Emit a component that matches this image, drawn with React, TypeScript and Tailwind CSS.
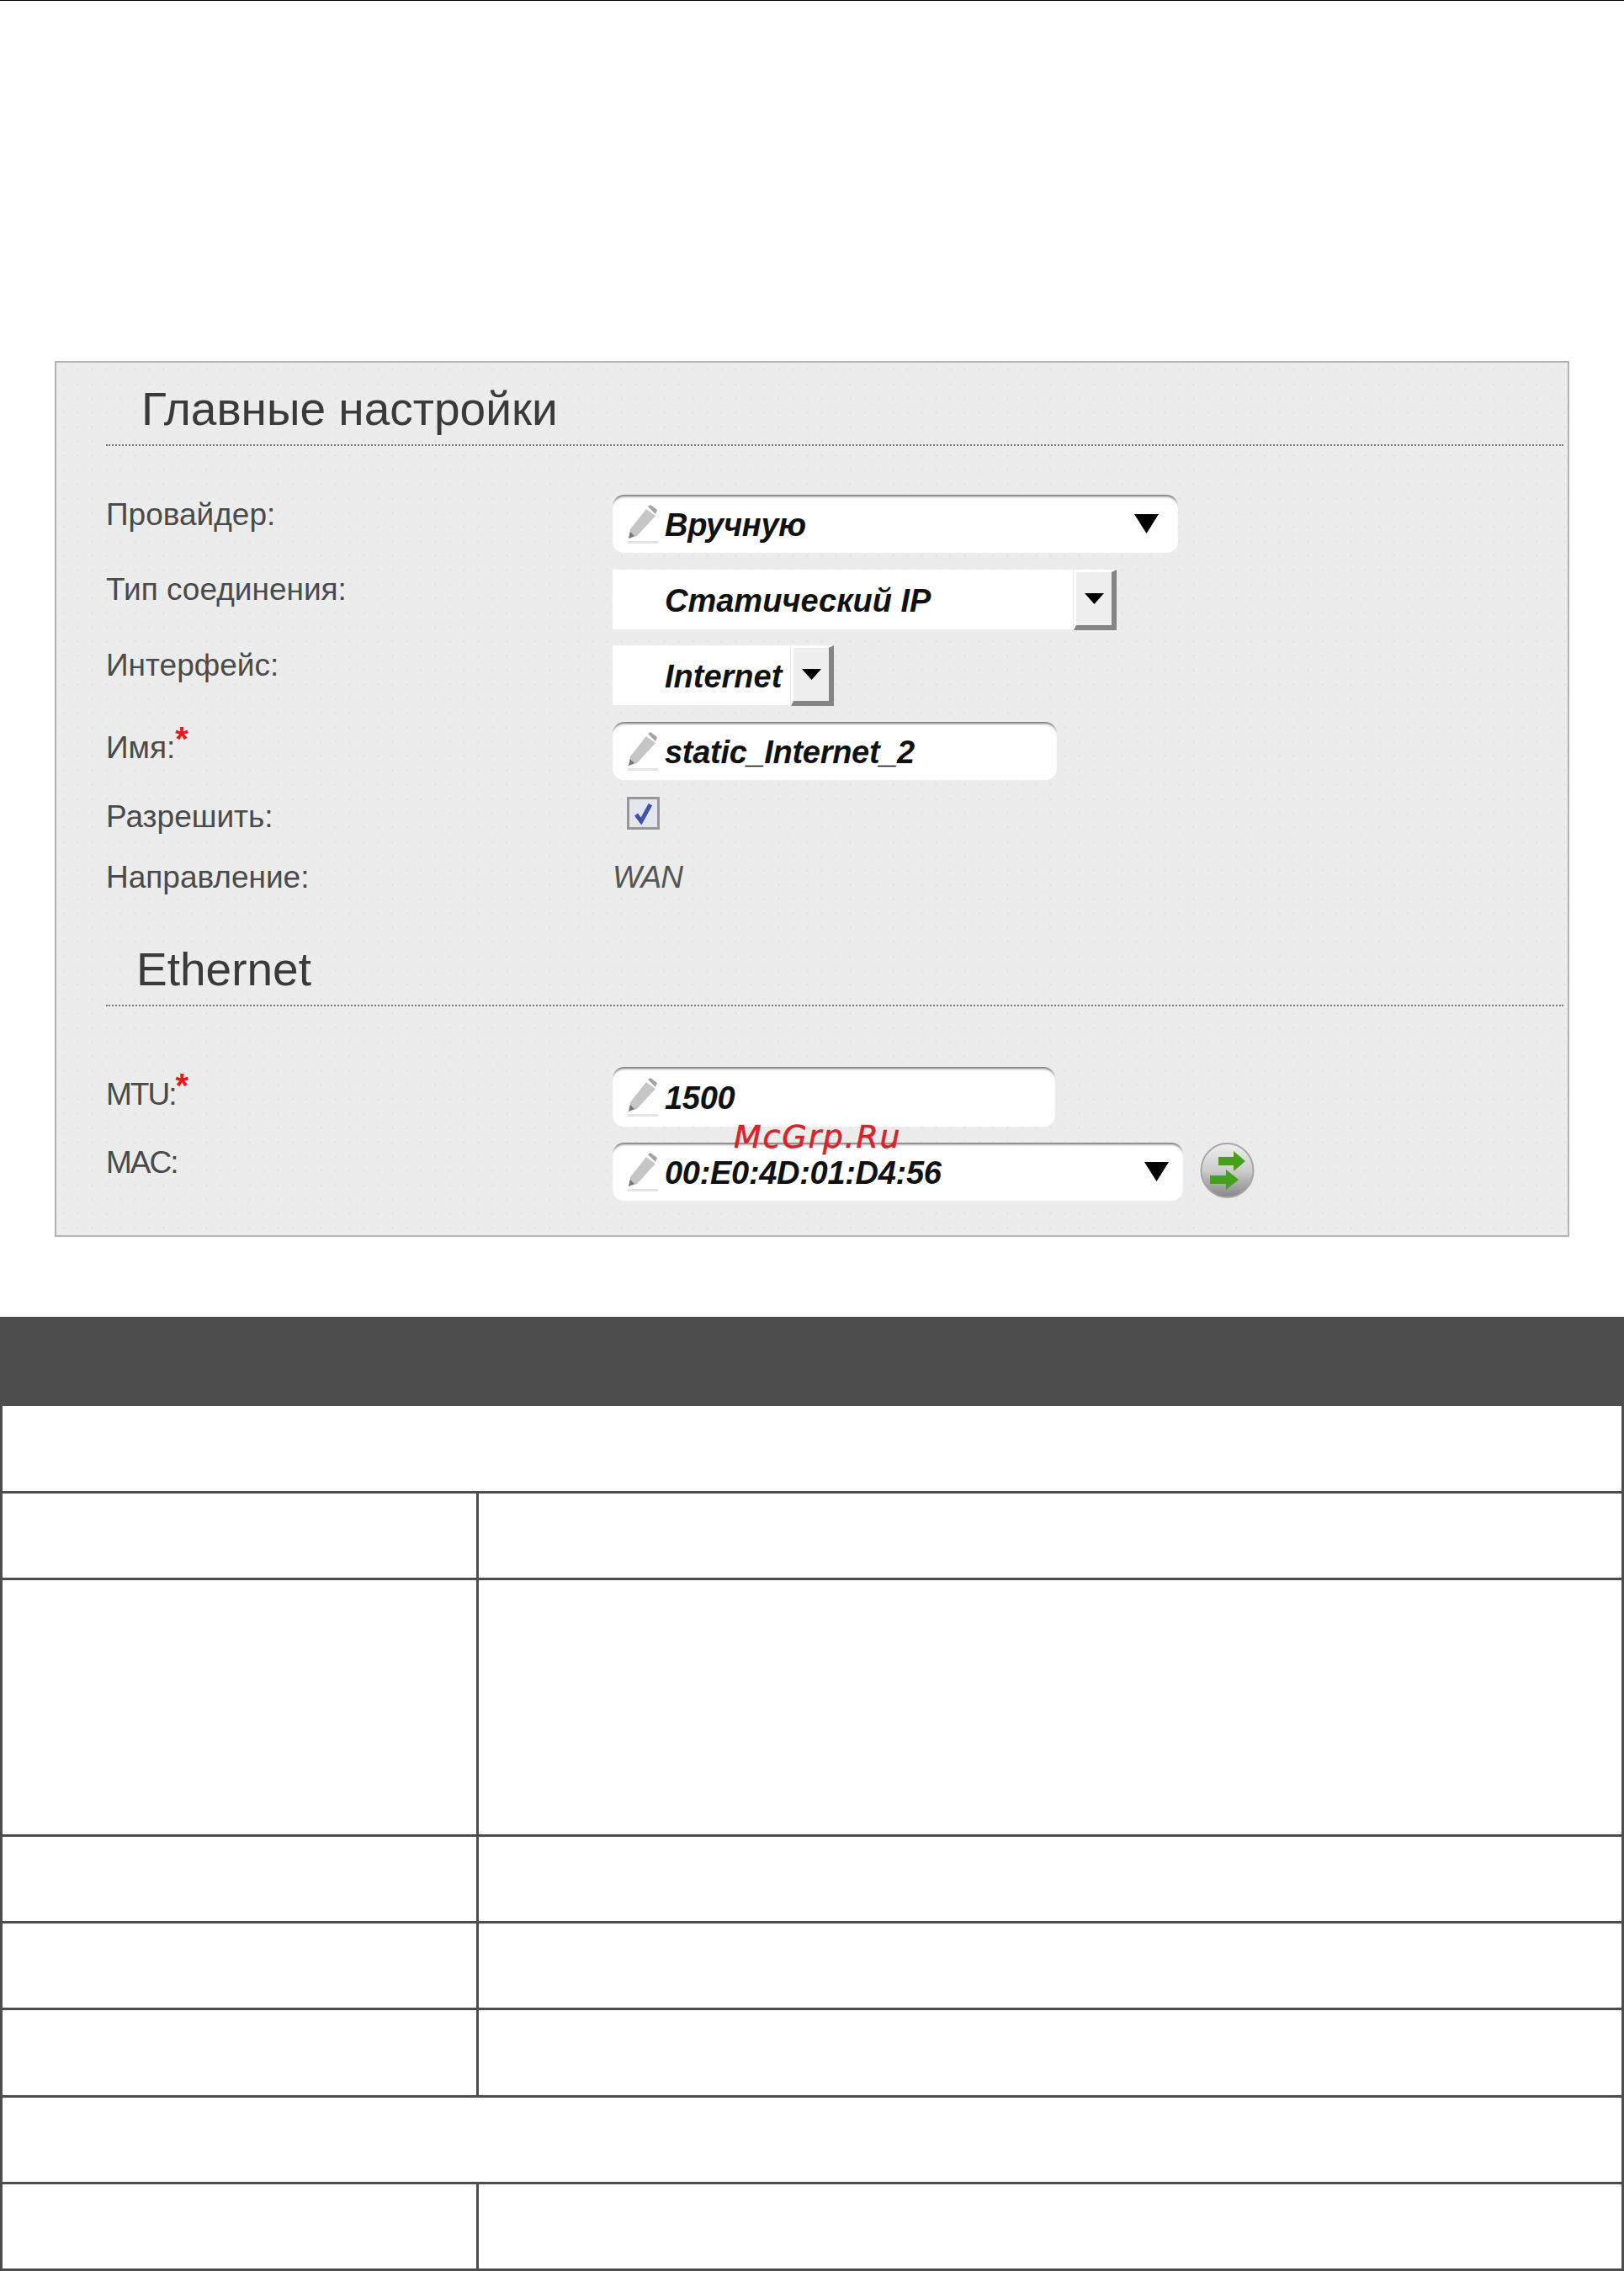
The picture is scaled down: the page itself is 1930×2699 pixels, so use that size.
const tableRows = [
  { h: "h-[104px]", full: true },
  { h: "h-[103px]", full: false },
  { h: "h-[305px]", full: false },
  { h: "h-[103px]", full: false },
  { h: "h-[103px]", full: false },
  { h: "h-[104px]", full: false },
  { h: "h-[103px]", full: true },
  { h: "h-[103px]", full: false },
]

const Pencil = () => (
  <svg width="38" height="48" viewBox="0 0 38 48" className="shrink-0">
    <polygon points="23,6 34,14 12,38 2,41 4,30" fill="#c6c6c6" />
    <polygon points="25,3 28,1 36,7 34,12" fill="#a3a3a3" />
    <polygon points="4,33 9,38 2,41" fill="#777" />
    <rect x="1" y="44" width="36" height="3" fill="#e4e4e4" />
  </svg>
)

const Triangle = ({ className }: { className: string }) => (
  <svg viewBox="0 0 29 23" preserveAspectRatio="none" className={className}>
    <polygon points="0,0 29,0 14.5,23" fill="#000" />
  </svg>
)

const Field = ({ w, h, value, arrow }: { w: string; h: string; value: string; arrow?: string }) => (
  <div className={`${w} ${h} flex items-center rounded-[14px] bg-white pl-[17px] shadow-[inset_0_4px_3px_-2px_#707070]`}>
    <Pencil />
    <span className="ml-[7px] pt-[3px] text-[38px] font-bold italic leading-none tracking-[-0.3px] text-[#111]">{value}</span>
    {arrow && <Triangle className={arrow} />}
  </div>
)

const PlainSelect = ({ w, value }: { w: string; value: string }) => (
  <div className="flex h-[72px]">
    <div className={`${w} flex h-[71px] items-center bg-white pl-[62px]`}>
      <span className="pt-[2px] text-[38px] font-bold italic leading-none text-[#111]">{value}</span>
    </div>
    <div className="ml-[1px] flex h-[72px] w-[51px] items-center justify-center border-t-[3px] border-r-[6px] border-b-[6px] border-l-[3px] border-t-white border-r-[#858585] border-b-[#858585] border-l-white bg-[#eeeeee]">
      <Triangle className="h-[13px] w-[23px]" />
    </div>
  </div>
)

const Row = ({
  label,
  star,
  top,
  h,
  labelPad,
  children,
}: {
  label: string
  star?: boolean
  top: string
  h: string
  labelPad: string
  children: React.ReactNode
}) => (
  <div className={`flex items-center ${top} ${h}`}>
    <div className={`w-[602px] shrink-0 text-[37px] leading-none text-[#4a4a4a] ${labelPad}`}>
      {label}
      {star && <span className="align-[9px] text-[40px] font-bold leading-[0] tracking-normal text-[#f0141e]">*</span>}
    </div>
    {children}
  </div>
)

const SectionTitle = ({ title, ml, h }: { title: string; ml: string; h: string }) => (
  <div className={`${h} mr-[5px] flex items-end border-b-2 border-dotted border-[#777] pb-[15px]`}>
    <h2 className={`${ml} text-[55px] leading-[54px] text-[#3a3a3a]`}>{title}</h2>
  </div>
)

const RefreshButton = () => (
  <svg width="65" height="68" viewBox="0 0 65 68" className="mb-[4px] ml-[20px] shrink-0">
    <defs>
      <linearGradient id="knob" x1="0" y1="0" x2="0" y2="1">
        <stop offset="0" stopColor="#efefef" />
        <stop offset="0.5" stopColor="#cdcdcd" />
        <stop offset="1" stopColor="#868686" />
      </linearGradient>
    </defs>
    <ellipse cx="32.5" cy="34" rx="31" ry="32" fill="url(#knob)" stroke="#a6a6a6" strokeWidth="2" />
    <polygon points="22,18 40,18 40,11 54,23 40,35 40,28 22,28" fill="#46a01e" />
    <polygon points="12,40 31,40 31,33 46,45 31,57 31,50 12,50" fill="#46a01e" />
  </svg>
)

export default function App() {
  return (
    <div className="h-[2699px] w-[1930px] overflow-hidden bg-white font-['Liberation_Sans',sans-serif]">
      <div className="h-px bg-black" />

      <section className="relative mt-[428px] ml-[65px] h-[1041px] w-[1800px] border-2 border-[#b4b4b4] bg-[#ececec] bg-[radial-gradient(#e5e5e5_1px,transparent_2px)] bg-[length:17px_17px] pl-[59px]">
        <SectionTitle title="Главные настройки" ml="ml-[42px]" h="h-[99px]" />
        <Row label="Провайдер:" top="mt-[58px]" h="h-[69px]" labelPad="pb-[22px]">
          <Field w="w-[672px]" h="h-[69px]" value="Вручную" arrow="ml-auto mr-[23px] h-[23px] w-[29px]" />
        </Row>
        <Row label="Тип соединения:" top="mt-[20px]" h="h-[72px]" labelPad="pb-[26px]">
          <PlainSelect w="w-[547px]" value="Статический IP" />
        </Row>
        <Row label="Интерфейс:" top="mt-[18px]" h="h-[72px]" labelPad="pb-[26px]">
          <PlainSelect w="w-[211px]" value="Internet" />
        </Row>
        <Row label="Имя:" star top="mt-[19px]" h="h-[69px]" labelPad="pb-[8px]">
          <Field w="w-[528px]" h="h-[69px]" value="static_Internet_2" />
        </Row>
        <Row label="Разрешить:" top="mt-[20px]" h="h-[39px]" labelPad="pt-[8px]">
          <div className="ml-[17px] flex h-[39px] w-[39px] items-center justify-center border-[3px] border-[#979797] bg-[#e3e6ee]">
            <svg width="27" height="27" viewBox="0 0 27 27">
              <path d="M5 15 L11 23 L22 3" fill="none" stroke="#3d55a8" strokeWidth="5" />
            </svg>
          </div>
        </Row>
        <Row label="Направление:" top="mt-[37px]" h="h-[38px]" labelPad="">
          <span className="text-[37px] italic leading-none tracking-[-0.8px] text-[#555]">WAN</span>
        </Row>
        <SectionTitle title="Ethernet" ml="ml-[36px]" h="h-[135px]" />
        <Row label="MTU:" star top="mt-[72px]" h="h-[71px]" labelPad="pb-[6px] tracking-[-2px]">
          <Field w="w-[526px]" h="h-[71px]" value="1500" />
        </Row>
        <Row label="MAC:" top="mt-[19px]" h="h-[69px]" labelPad="pb-[22px] tracking-[-2px]">
          <Field w="w-[678px]" h="h-[69px]" value="00:E0:4D:01:D4:56" arrow="ml-auto mr-[17px] h-[23px] w-[29px]" />
          <RefreshButton />
        </Row>

        {/* watermark over the form */}
        <div className="absolute top-[900px] left-[805px] font-['DejaVu_Sans',sans-serif] text-[38px] leading-[40px] tracking-[1.75px] text-[#d9232b] italic [-webkit-text-stroke:0.6px_#d9232b]">
          McGrp.Ru
        </div>
      </section>

      <div className="mt-[95px] h-[106px] bg-[#4d4d4d]" />

      <div className="border-x-[3px] border-[#4d4d4d]">
        {tableRows.map((row, i) => (
          <div key={i} className={`flex border-b-[3px] border-[#4d4d4d] ${row.h}`}>
            {!row.full && <div className="w-[566px] shrink-0 border-r-[3px] border-[#4d4d4d]" />}
            <div className="flex-1" />
          </div>
        ))}
      </div>
    </div>
  )
}
